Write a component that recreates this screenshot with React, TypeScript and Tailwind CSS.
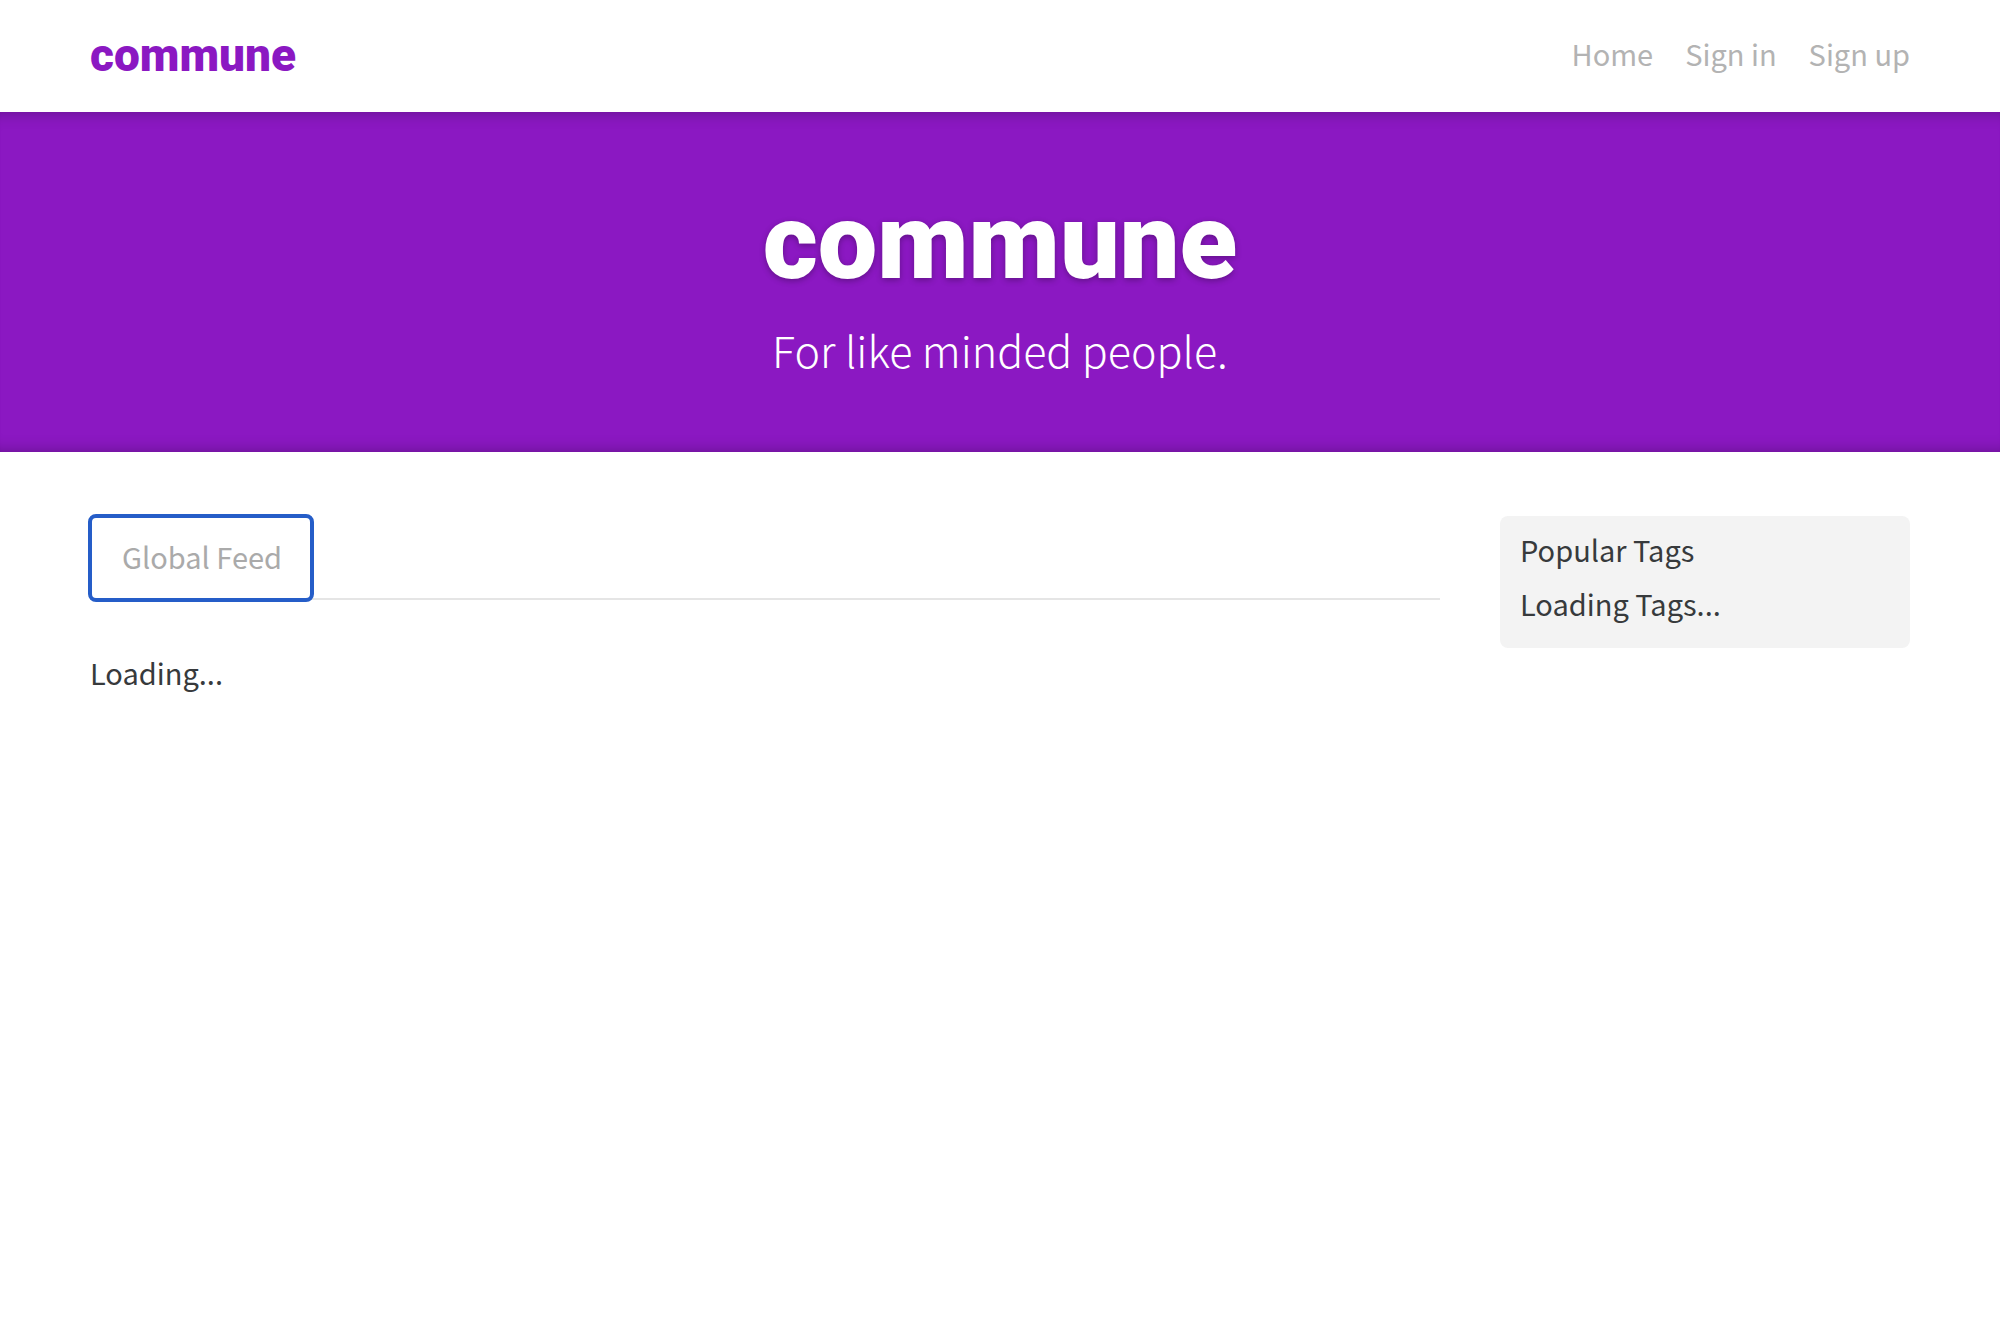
const navLinks = ["Home", "Sign in", "Sign up"];

function Header() {
  return (
    <header className="px-[60px]">
      <nav className="mx-auto flex h-28 max-w-[1880px] items-center justify-between px-[30px] pb-0.5">
        <a href="#" className="font-[Roboto,sans-serif] text-[46px] leading-[56px] font-black text-[#8b18c2]">
          commune
        </a>
        <ul className="flex gap-8 pb-1 text-[#b3b3b3]">
          {navLinks.map((label) => (
            <li key={label}>
              <a href="#">{label}</a>
            </li>
          ))}
        </ul>
      </nav>
    </header>
  );
}

function Banner() {
  return (
    <section className="bg-[#8b18c2] px-16 pt-16 pb-[70px] text-center text-white shadow-[inset_0_16px_16px_-16px_rgba(0,0,0,0.3),inset_0_-16px_16px_-16px_rgba(0,0,0,0.3)]">
      <h1 className="pb-2 font-[Roboto,sans-serif] text-[106px] leading-[132px] font-black text-shadow-[0_2px_6px_rgba(0,0,0,0.3)]">
        commune
      </h1>
      <p className="text-[43px] leading-[66px] font-light">For like minded people.</p>
    </section>
  );
}

function Feed() {
  return (
    <section className="min-w-0 flex-1">
      <div className="flex border-b-2 border-[#e5e5e5]">
        <button
          type="button"
          className="-mb-0.5 rounded-md pt-4 pr-[30px] pb-5 pl-8 text-[#aaaaaa] outline-4 -outline-offset-2 outline-[#255dc8]"
        >
          Global Feed
        </button>
      </div>
      <p className="py-12">Loading...</p>
    </section>
  );
}

function Sidebar() {
  return (
    <aside className="w-[410px] shrink-0 rounded-lg bg-[#f3f3f3] px-5 pt-[9px] pb-[21px]">
      <p className="mb-1.5">Popular Tags</p>
      <p>Loading Tags...</p>
    </aside>
  );
}

export default function App() {
  return (
    <div className='min-h-screen bg-white font-["Noto_Sans_CJK_JP","Noto_Sans",sans-serif] text-[29px] leading-[48px] text-[#373a3c]'>
      <Header />
      <Banner />
      <main className="px-[60px] pt-16">
        <div className="mx-auto flex max-w-[1880px] items-start gap-[60px] px-[30px]">
          <Feed />
          <Sidebar />
        </div>
      </main>
    </div>
  );
}
